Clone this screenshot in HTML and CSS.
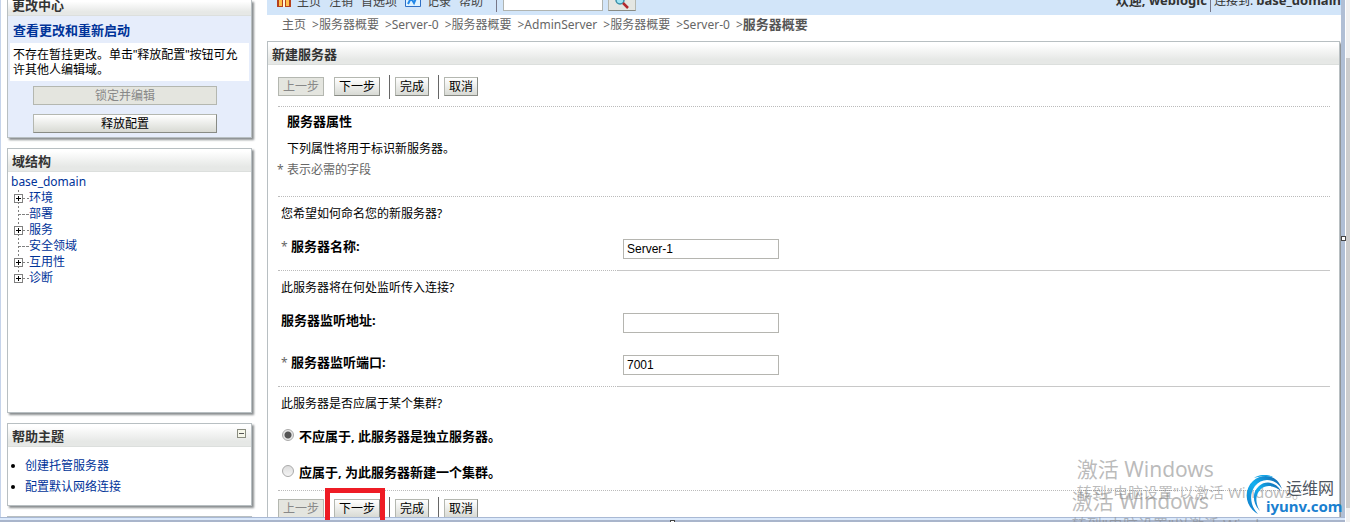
FILE: index.html
```
<!DOCTYPE html>
<html lang="zh-CN">
<head>
  <meta charset="UTF-8">
  <title>新建服务器</title>
  <meta name="viewport" content="width=device-width, initial-scale=1.0">
  <link rel="stylesheet" href="styles.css">
</head>
<body>

<div class="page">
  <aside class="sidebar">
    <section class="panel change-center">
      <h2 class="panel-title cut">更改中心</h2>
      <h3>查看更改和重新启动</h3>
      <p>不存在暂挂更改。单击<span class="quote">"</span>释放配置<span class="quote">"</span>按钮可允许其他人编辑域。</p>
      <button type="button" class="btn wide" disabled>锁定并编辑</button>
      <button type="button" class="btn wide">释放配置</button>
    </section>

    <section class="panel domain">
      <h2 class="panel-title">域结构</h2>
      <a href="#" class="root">base_domain</a>
      <ul class="tree">
        <li class="parent"><a href="#">环境</a></li>
        <li><a href="#">部署</a></li>
        <li class="parent"><a href="#">服务</a></li>
        <li><a href="#">安全领域</a></li>
        <li class="parent"><a href="#">互用性</a></li>
        <li class="parent"><a href="#">诊断</a></li>
      </ul>
    </section>

    <section class="panel help">
      <h2 class="panel-title">帮助主题
        <button type="button" class="collapse" aria-label="折叠"></button>
      </h2>
      <ul class="help-list">
        <li><a href="#">创建托管服务器</a></li>
        <li><a href="#">配置默认网络连接</a></li>
      </ul>
    </section>

    <section class="panel">
      <h2 class="panel-title"></h2>
    </section>
  </aside>

  <main class="main">
    <div class="toolbar">
      <svg class="icon home" width="14" height="14" viewBox="0 0 14 14">
        <path d="M0 7L7 0l7 7v7H0z" fill="#b5401c"/>
        <path d="M2 7h3v6H2zM9 7h3v6H9z" fill="#ffc04a"/>
        <path d="M6 6h2v8H6z" fill="#fff3d0"/>
      </svg>
      <a href="#">主页</a>
      <a href="#">注销</a>
      <a href="#">首选项</a>
      <svg class="icon" width="16" height="14" viewBox="0 0 16 14">
        <path d="M.5.5h15v13H.5z" fill="#dff2ff" stroke="#2f6fc4"/>
        <path d="M3 11l3-6 3 5 3-7" fill="none" stroke="#2488e8" stroke-width="2"/>
      </svg>
      <a href="#">记录</a>
      <a href="#">帮助</a>
      <span class="bar"></span>
      <input type="text" class="search" aria-label="搜索">
      <button type="button" class="search-btn" aria-label="搜索">
        <svg width="14" height="14" viewBox="0 0 14 14">
          <circle cx="5" cy="5" r="4" fill="#9fe4f4" stroke="#3a8fa8" stroke-width="1.5"/>
          <path d="M8 8l5 5" stroke="#b3282d" stroke-width="2.5"/>
        </svg>
      </button>
      <div class="user">
        <strong>欢迎, weblogic</strong>
        <span class="bar"></span>
        <span>连接到: <strong>base_domain</strong></span>
      </div>
    </div>

    <nav class="breadcrumb">
      <a href="#">主页</a>
      <a href="#">&gt;服务器概要</a>
      <a href="#">&gt;Server-0</a>
      <a href="#">&gt;服务器概要</a>
      <a href="#">&gt;AdminServer</a>
      <a href="#">&gt;服务器概要</a>
      <a href="#">&gt;Server-0</a>
      <span>&gt;<strong>服务器概要</strong></span>
    </nav>

    <section class="panel content">
      <h1 class="panel-title">新建服务器</h1>
      <form>
        <div class="buttons">
          <button type="button" class="btn" disabled>上一步</button>
          <button type="button" class="btn">下一步</button>
          <span class="divider"></span>
          <button type="button" class="btn">完成</button>
          <span class="divider"></span>
          <button type="button" class="btn">取消</button>
        </div>

        <div class="intro">
          <h2>服务器属性</h2>
          <p>下列属性将用于标识新服务器。</p>
          <p class="required-note"><span class="star">*</span>表示必需的字段</p>
        </div>

        <div class="group">
          <p class="question">您希望如何命名您的新服务器?</p>
          <div class="row">
            <label for="name"><span class="star">*</span>服务器名称:</label>
            <input type="text" id="name" value="Server-1">
          </div>
        </div>

        <div class="group">
          <p class="question">此服务器将在何处监听传入连接?</p>
          <div class="row">
            <label for="address">服务器监听地址:</label>
            <input type="text" id="address">
          </div>
          <div class="row">
            <label for="port"><span class="star">*</span>服务器监听端口:</label>
            <input type="text" id="port" value="7001">
          </div>
        </div>

        <div class="cluster">
          <p class="question">此服务器是否应属于某个集群?</p>
          <div class="choice">
            <input type="radio" name="cluster" id="standalone" checked>
            <label for="standalone">不应属于, 此服务器是独立服务器。</label>
          </div>
          <div class="choice">
            <input type="radio" name="cluster" id="newcluster">
            <label for="newcluster">应属于, 为此服务器新建一个集群。</label>
          </div>
        </div>

        <div class="buttons bottom">
          <button type="button" class="btn" disabled>上一步</button>
          <span class="marked"><button type="button" class="btn">下一步</button></span>
          <span class="divider"></span>
          <button type="button" class="btn">完成</button>
          <span class="divider"></span>
          <button type="button" class="btn">取消</button>
        </div>
      </form>
    </section>
  </main>

  <div class="edge"></div>
  <div class="scroll"><div class="thumb"></div></div>
</div>

<div class="frame-bottom"></div>

<div class="watermark first">
  <div class="big">激活 Windows</div>
  <div class="small">转到"电脑设置"以激活 Windows。</div>
</div>
<div class="watermark second">
  <div class="big">激活 Windows</div>
  <div class="small">转到"电脑设置"以激活 Windows。</div>
</div>

<div class="logo">
  <svg width="38" height="40" viewBox="0 0 38 40">
    <defs>
      <linearGradient id="swirl" x1="0" y1="1" x2="1" y2="0">
        <stop offset="0" stop-color="#1275c4"/>
        <stop offset=".5" stop-color="#12b0f0"/>
        <stop offset="1" stop-color="#1560a8"/>
      </linearGradient>
    </defs>
    <path d="M12 39C-1 32-3 15 7 6c9-8 24-7 29 8C29 3 16 2 9 11c-6 8-5 20 3 28z" fill="url(#swirl)"/>
    <path d="M14 36C6 28 6 17 13 11c7-6 17-4 22 5-6-5-14-7-20-2-6 5-6 14-1 22z" fill="url(#swirl)"/>
    <path d="M8 3C14-1 22-1 27 2 20 1 14 1 8 3z" fill="#12a5e8"/>
  </svg>
  <span class="logo-name">运维网</span>
  <span class="logo-url">iyunv.com</span>
</div>

</body>
</html>
```
FILE: styles.css
```
*, *::before, *::after {
  box-sizing: border-box;
}
body {
  margin: 0;
  height: 100vh;
  overflow: hidden;
  position: relative;
  background: #fff;
  color: #000;
  font-family: "Noto Sans", "Noto Sans CJK SC", sans-serif;
  font-size: 12px;
  line-height: 16px;
}
h1, h2, h3, p, ul {
  margin: 0;
  padding: 0;
}
ul {
  list-style: none;
}
a {
  color: #039;
  text-decoration: none;
}
button, input {
  font: inherit;
  margin: 0;
}

.page {
  display: flex;
  align-items: stretch;
  height: 100%;
  border-left: 1px solid #c5d3ea;
}
.sidebar {
  width: 245px;
  margin: 0 15px 0 6px;
  flex: none;
}
.main {
  display: flex;
  flex-direction: column;
  flex: 1;
  min-width: 0;
}

/* panels */
.panel {
  border: 1px solid #b8bfc2;
  background: #fff;
  box-shadow: 2px 2px 2px #8a8e90;
  margin-bottom: 10px;
}
.panel-title {
  display: flex;
  justify-content: space-between;
  height: 23px;
  padding: 4px 4px 0;
  border-bottom: 1px solid #dcdfdd;
  background: linear-gradient(#fff 10%, #e6e8e6 80%);
  color: #333;
  font-size: 13px;
  line-height: 16px;
  font-weight: bold;
}

/* change center */
.change-center {
  border-top: 0;
  background: #e6edfb;
  height: 138px;
}
.panel-title.cut {
  height: 16px;
  padding-top: 0;
  padding-bottom: 2px;
  align-items: flex-end;
}
.change-center h3 {
  padding: 6px 5px 5px;
  color: #039;
  font-size: 13px;
}
.change-center p {
  margin: 0 2px 5px;
  padding: 4px 3px;
  background: #fff;
  line-height: 15px;
}
.quote {
  font-family: "Liberation Sans", sans-serif;
  line-height: 1;
}
.btn {
  height: 19px;
  padding: 0 4px;
  border: 1px solid #b4b7b0;
  border-right-color: #888b85;
  border-bottom-color: #888b85;
  background: linear-gradient(#fff, #d8dad4);
  color: #000;
  line-height: 16px;
  white-space: nowrap;
}
.btn:disabled {
  border-color: #b4b7b0;
  background: #e4e5df;
  color: #888;
}
.btn.wide {
  display: block;
  width: 184px;
  margin: 0 auto 9px 25px;
}

/* domain tree */
.domain {
  height: 265px;
}
.root {
  display: block;
  padding: 2px 3px 0;
}
.tree {
  margin-left: 10px;
  background: repeating-linear-gradient(#808080 0 2px, #fff 2px 4px) 0 0 / 1px 88px no-repeat;
}
.tree li {
  display: flex;
  align-items: center;
  height: 16px;
}
.tree li::before {
  content: "";
  width: 11px;
  border-top: 1px dashed #808080;
}
.tree .parent {
  background: repeating-linear-gradient(90deg, #808080 0 2px, #fff 2px 4px) 5px 8px / 6px 1px no-repeat;
}
.tree .parent::before {
  width: 9px;
  height: 9px;
  margin: 0 6px 0 -4px;
  border: 1px solid #808080;
  background:
    linear-gradient(#000, #000) center / 5px 1px no-repeat,
    linear-gradient(#000, #000) center / 1px 5px no-repeat,
    #fff;
}

/* help topics */
.help {
  height: 83px;
}
.collapse {
  width: 9px;
  height: 9px;
  margin: 1px 1px 0;
  padding: 0;
  border: 1px solid #8a8d80;
  background: linear-gradient(#555, #555) center / 5px 1px no-repeat, #f6f7ea;
}
.help-list {
  padding-top: 8px;
}
.help-list li {
  display: flex;
  align-items: center;
  height: 21px;
  padding-left: 3px;
}
.help-list li::before {
  content: "";
  width: 4px;
  height: 4px;
  margin-right: 10px;
  border-radius: 50%;
  background: #000;
}

/* toolbar */
.toolbar {
  display: flex;
  flex: none;
  align-items: flex-end;
  height: 15px;
  padding: 0 0 5px 10px;
  overflow: hidden;
  background: #d2e5f9;
  white-space: nowrap;
}
.toolbar a {
  margin-right: 8px;
  color: #444;
}
.toolbar .icon {
  flex: none;
  margin: 0 6px 3px 0;
}
.bar {
  align-self: flex-end;
  width: 1px;
  height: 20px;
  margin: 0 6px -2px 5px;
  background: #778;
}
.search {
  width: 100px;
  height: 20px;
  margin-bottom: -1px;
  border: 1px solid #b0b4b0;
  background: #fff;
}
.search-btn {
  width: 28px;
  height: 20px;
  margin: 0 0 -1px 5px;
  padding: 0;
  border: 1px solid #b4b7b0;
  border-bottom-color: #888b85;
  background: #e4e6e2;
}
.search-btn svg {
  display: block;
  margin: 2px auto 0;
}
.user {
  display: flex;
  margin-left: auto;
  color: #333;
}
.user strong {
  font-size: 13px;
}
.user .bar {
  margin: 0 3px -2px 3px;
}

.breadcrumb {
  display: flex;
  gap: 6px;
  padding: 2px 15px 8px;
  white-space: nowrap;
  color: #666;
}
.breadcrumb a {
  color: #666;
}
.breadcrumb strong {
  font-size: 13px;
  line-height: 1;
  color: #555;
}

/* wizard form */
.content {
  flex: 1 0 auto;
  margin-right: 1px;
  margin-bottom: 0;
}
.content form {
  padding: 0 9px 0 10px;
}
.buttons {
  display: flex;
  align-items: center;
  gap: 6px;
  height: 41px;
  padding-top: 2px;
}
.buttons.bottom {
  height: 35px;
  padding-top: 0;
}
.buttons > .btn:first-child {
  margin-right: 4px;
}
.divider {
  width: 1px;
  height: 24px;
  margin: 0 -1px 0 3px;
  background: #666;
}
.intro {
  border-top: 1px dotted #bbb;
  border-bottom: 1px dotted #bbb;
  height: 91px;
  padding: 6px 0 0 9px;
}
.intro h2 {
  font-size: 13px;
  line-height: 16px;
  margin-bottom: 12px;
}
.intro p {
  margin-bottom: 5px;
}
.intro .required-note {
  margin-left: -10px;
  color: #666;
}
.star {
  display: inline-block;
  width: 10px;
  color: #666;
  font-size: 12px;
  font-weight: normal;
}
.question {
  padding: 9px 3px 6px;
}
.row {
  display: grid;
  grid-template-columns: 340px 1fr;
  height: 42px;
}
.row label {
  padding: 10px 3px 0;
  font-size: 13px;
  font-weight: bold;
}
.row input {
  width: 156px;
  height: 20px;
  margin: 11px 5px 0;
  padding: 0 3px;
  border: 1px solid #b5b5b0;
  background: #fff;
  font-family: "Liberation Sans", Arial, sans-serif;
}
.group {
  background: linear-gradient(90deg, transparent 340px, #c8c8c8 340px) bottom / 100% 1px no-repeat;
}
/* dotted under the label column only */
.group::after {
  content: "";
  display: block;
  width: 340px;
  border-bottom: 1px dotted #bbb;
}
.cluster {
  height: 104px;
  border-bottom: 1px dotted #bbb;
}
.choice {
  display: flex;
  align-items: center;
  gap: 5px;
  height: 36px;
  padding-left: 4px;
}
.choice label {
  font-size: 13px;
  font-weight: bold;
}
.choice input {
  appearance: none;
  width: 12px;
  height: 12px;
  margin: 0 0 2px;
  border: 1px solid #aaa;
  border-radius: 50%;
  background: linear-gradient(#ddd, #f4f4f4);
}
.choice input:checked {
  background: radial-gradient(#555 0 3px, #e6e6e6 4px);
}

/* red frame round the next button */
.marked {
  position: relative;
  display: flex;
}
.marked::after {
  content: "";
  position: absolute;
  z-index: 3;
  left: -9px;
  right: -5px;
  top: -11px;
  height: 32px;
  border: 5px solid #ee1c25;
  border-bottom: 0;
  pointer-events: none;
}

/* window frame */
.edge {
  position: relative;
  z-index: 1;
  width: 4px;
  background: #b0bfd5;
}
.edge::after {
  content: "";
  position: absolute;
  top: 236px;
  left: 0;
  width: 5px;
  height: 5px;
  border: 1px solid #444;
  background: #fff;
}
.scroll {
  width: 5px;
  padding-top: 58px;
  border-left: 1px solid #fff;
  background: #f0f0f0;
}
.thumb {
  height: 450px;
  background: #cdcdcd;
}
.frame-bottom {
  position: absolute;
  z-index: 2;
  left: 0;
  right: 5px;
  bottom: 0;
  height: 5px;
  border-top: 1px solid #a9b9d4;
  border-bottom: 2px solid #a9b5cb;
  background: #dbe9fb;
}
.frame-bottom::after {
  content: "";
  position: absolute;
  left: 50%;
  top: 2px;
  width: 5px;
  height: 5px;
  margin-left: -3px;
  border: 1px solid #444;
  background: #fff;
}

.watermark {
  position: absolute;
  z-index: 2;
  color: rgba(120, 120, 120, 0.5);
  white-space: nowrap;
}
.watermark.first {
  right: 43px;
  top: 456px;
}
.watermark.second {
  right: 48px;
  top: 488px;
}
.watermark .big {
  font-size: 21px;
  line-height: 26px;
}
.watermark .small {
  font-size: 15px;
  line-height: 20px;
}

.logo {
  position: absolute;
  z-index: 4;
  right: 6px;
  top: 475px;
  display: grid;
  grid-template-columns: 20px auto;
  width: 98px;
}
.logo svg {
  grid-area: 1 / 1 / 3 / 2;
}
.logo-name {
  grid-area: 1 / 2;
  padding: 4px 0 0 20px;
  color: #4d5560;
  font-size: 16px;
  line-height: 18px;
}
.logo-url {
  grid-area: 2 / 2;
  color: #1a80d0;
  font-size: 15px;
  line-height: 18px;
  font-weight: bold;
}
```
